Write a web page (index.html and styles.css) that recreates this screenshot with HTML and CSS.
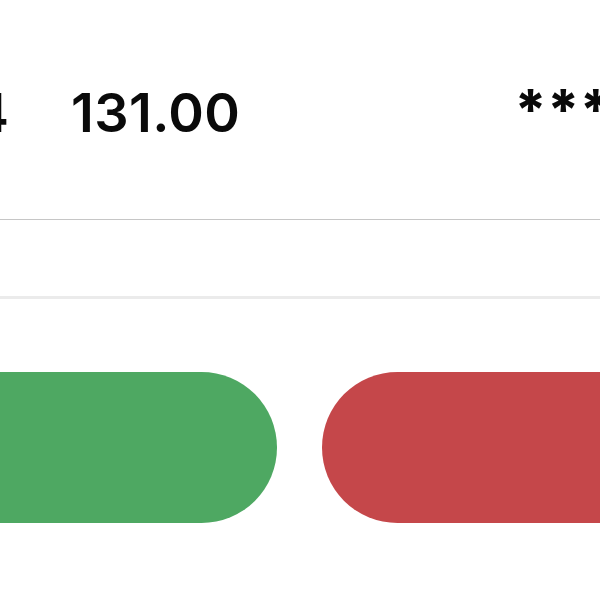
FILE: index.html
```html
<!DOCTYPE html>
<html>
<head>
<meta charset="utf-8">
<link rel="stylesheet" href="styles.css">
</head>
<body>
<div class="screen">
  <div class="quote-row">
    <span class="cell cell-prev">4</span>
    <span class="cell cell-price">131.00</span>
    <span class="cell cell-mask">****</span>
  </div>
  <div class="divider"></div>
  <div class="spacer-row"></div>
  <div class="divider divider-light"></div>
  <div class="actions">
    <button class="btn btn-buy"></button>
    <button class="btn btn-sell"></button>
  </div>
</div>
</body>
</html>
```
FILE: styles.css
```css
html, body {
  margin: 0;
  padding: 0;
  background: #ffffff;
  overflow: hidden;
}
.screen {
  width: 600px;
  height: 600px;
  overflow: hidden;
  font-family: Inter, "Noto Sans", sans-serif;
  color: #0a0a0a;
}
.quote-row {
  display: flex;
  align-items: baseline;
  height: 219px;
  box-sizing: border-box;
  padding-top: 72px;
  margin-left: -27px;
  width: 720px;
  font-size: 54px;
  font-weight: 600;
  line-height: 80px;
  white-space: nowrap;
}
.cell-price {
  margin-left: 62px;
  letter-spacing: 0.4px;
}
.cell-mask {
  margin-left: 274px;
  font-size: 56px;
  font-weight: 800;
  letter-spacing: 0;
  position: relative;
  top: -2px;
}
.divider {
  height: 1px;
  background: #c6c6c6;
}
.spacer-row {
  height: 76px;
}
.divider-light {
  height: 3px;
  background: #ebebeb;
}
.actions {
  display: flex;
  gap: 45px;
  margin-top: 73px;
  margin-left: -120px;
}
.btn {
  border: none;
  height: 151px;
  border-radius: 76px;
  padding: 0;
  flex: none;
}
.btn-buy {
  width: 397px;
  background: #4ea862;
}
.btn-sell {
  width: 400px;
  background: #c5474a;
}
```
